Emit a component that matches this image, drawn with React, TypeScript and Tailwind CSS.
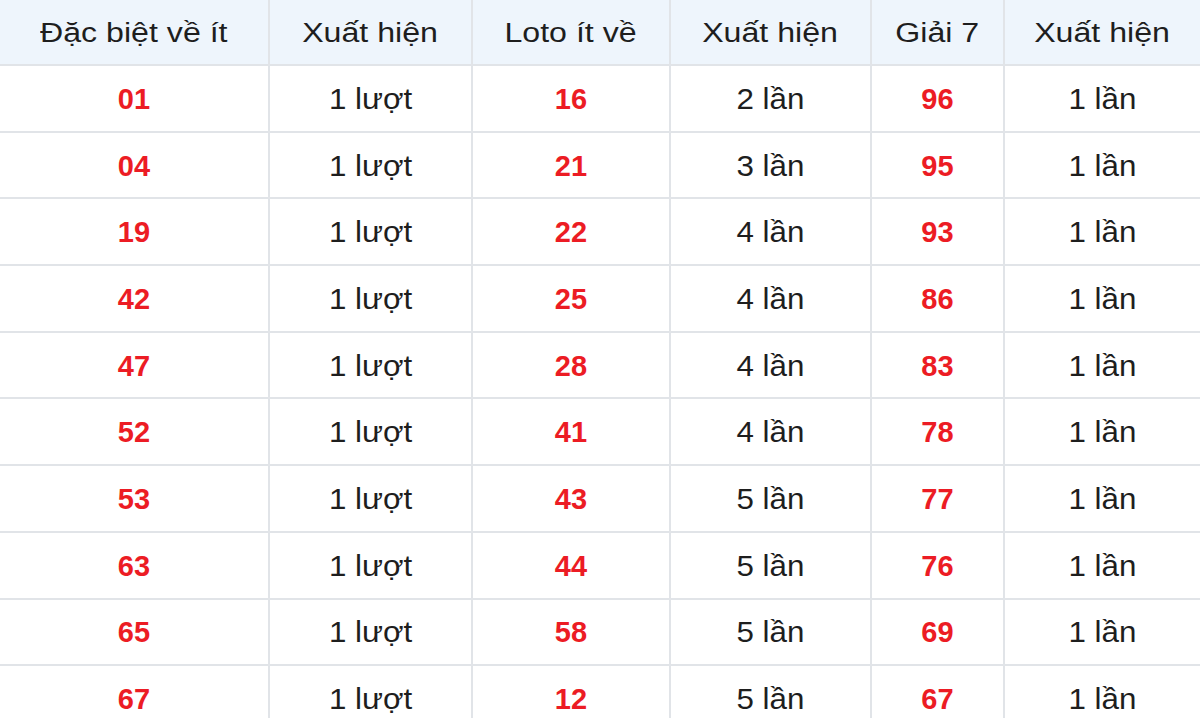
const headers = ['Đặc biệt về ít', 'Xuất hiện', 'Loto ít về', 'Xuất hiện', 'Giải 7', 'Xuất hiện']

const rows: [string, string, string, string, string, string][] = [
    ['01', '1 lượt', '16', '2 lần', '96', '1 lần'],
    ['04', '1 lượt', '21', '3 lần', '95', '1 lần'],
    ['19', '1 lượt', '22', '4 lần', '93', '1 lần'],
    ['42', '1 lượt', '25', '4 lần', '86', '1 lần'],
    ['47', '1 lượt', '28', '4 lần', '83', '1 lần'],
    ['52', '1 lượt', '41', '4 lần', '78', '1 lần'],
    ['53', '1 lượt', '43', '5 lần', '77', '1 lần'],
    ['63', '1 lượt', '44', '5 lần', '76', '1 lần'],
    ['65', '1 lượt', '58', '5 lần', '69', '1 lần'],
    ['67', '1 lượt', '12', '5 lần', '67', '1 lần'],
]

const cols = 'grid grid-cols-[270px_203px_198px_201px_133px_195px]'

function App() {
    return (
        <div className="w-[1200px] h-[718px] overflow-hidden bg-white text-[#1e1e1e] font-['Liberation_Sans',Arial,sans-serif]">
            <div className={`${cols} h-[66px] bg-[#eef5fc] border-b-2 border-[#e1e4e8]`}>
                {headers.map((h, i) => (
                    <div
                        key={i}
                        className={`flex items-center justify-center pt-[3px] ${i < 5 ? 'border-r-2 border-[#e1e4e8]' : ''}`}
                    >
                        <span className="inline-block text-[27px] leading-none scale-x-[1.19]">{h}</span>
                    </div>
                ))}
            </div>
            {rows.map((r, ri) => (
                <div key={ri} className={`${cols} h-[66.7px] border-b-2 border-[#e1e4e8]`}>
                    {r.map((c, ci) => (
                        <div
                            key={ci}
                            className={`flex items-center justify-center pt-[2px] ${ci < 5 ? 'border-r-2 border-[#e1e4e8]' : ''}`}
                        >
                            {ci % 2 === 0 ? (
                                <span className="text-[29px] leading-none font-bold text-[#ec1c24]">{c}</span>
                            ) : (
                                <span className="inline-block text-[29px] leading-none scale-x-[1.08]">{c}</span>
                            )}
                        </div>
                    ))}
                </div>
            ))}
        </div>
    )
}

export default App
